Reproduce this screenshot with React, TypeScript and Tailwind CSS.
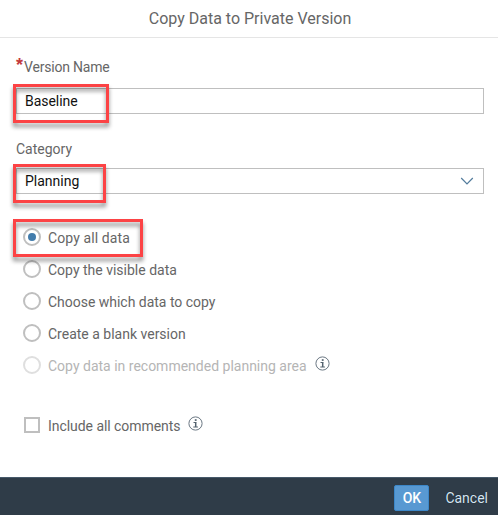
import type { ReactNode } from "react";

function Info() {
  return (
    <svg className="block h-[15px] w-[15px]" viewBox="0 0 15 15" fill="none">
      <circle cx="7.5" cy="7.5" r="6.6" stroke="#6b7883" strokeWidth="1" />
      <path d="M5.5 6.5h2.7M5.3 11h4.6" stroke="#53626e" strokeWidth="1" />
      <path d="M7.7 6v5" stroke="#53626e" strokeWidth="1.5" />
      <rect x="6.8" y="3.2" width="1.8" height="1.7" fill="#53626e" />
    </svg>
  );
}

function Highlight({ className }: { className: string }) {
  return (
    <div
      className={`pointer-events-none absolute border-[3px] border-[#fc4345] drop-shadow-[0_4px_2px_rgba(0,0,0,0.45)] ${className}`}
    />
  );
}

function Option({
  children,
  tracking = "tracking-normal",
  checked = false,
  disabled = false,
}: {
  children: ReactNode;
  tracking?: string;
  checked?: boolean;
  disabled?: boolean;
}) {
  return (
    <div className="flex h-8 items-center">
      <span
        className={`flex h-[18px] w-[18px] shrink-0 items-center justify-center rounded-full border-2 ${
          disabled ? "border-[#dfdfdf]" : "border-[#bfbfbf]"
        }`}
      >
        {checked && <span className="h-2 w-2 rounded-full bg-[#427cac]" />}
      </span>
      <span
        className={`ml-[7px] pt-px whitespace-nowrap ${tracking} ${
          disabled ? "text-[#b5b5b5]" : "text-[#666]"
        }`}
      >
        {children}
      </span>
      {disabled && (
        <span className="mb-[3px] ml-[8px]">
          <Info />
        </span>
      )}
    </div>
  );
}

export default function App() {
  return (
    <div className="relative flex h-[515px] w-[498px] flex-col overflow-hidden bg-white font-[Roboto,'Liberation_Sans',sans-serif] text-[14px] leading-5 text-[#666]">
      <header className="flex h-[38px] shrink-0 items-center justify-center border-b border-[#e5e5e5] pt-px pl-0.5 text-[16px]">
        <span>Copy Data to Private Version</span>
      </header>

      <main className="flex flex-1 flex-col pr-[14px] pl-4">
        <label className="mt-[19px] flex h-5 items-center">
          <span className="h-[24px] w-2 font-['Liberation_Sans',sans-serif] text-[18px] leading-5 font-bold text-[#c33a3d]">*</span>
          <span className="tracking-[-0.2px]">Version Name</span>
        </label>
        <div className="mt-[11px] flex h-[26px] items-center border border-[#bfbfbf] pl-2 text-[#111]">
          <span className="tracking-[-0.05px]">Baseline</span>
        </div>
        <label className="mt-[25px] h-5">
          <span>Category</span>
        </label>
        <div className="mt-[9px] flex h-[26px] items-center justify-between border border-[#bfbfbf] pr-[9px] pl-2 text-[#111]">
          <span>Planning</span>
          <svg className="h-[8px] w-[14px]" viewBox="0 0 14 8" fill="none">
            <path d="M1.2 1 7 6.9 12.8 1" stroke="#527b9c" strokeWidth="1.2" />
          </svg>
        </div>

        <div className="mt-[27px] flex flex-col pl-[7px]">
          <Option checked tracking="tracking-[0.1px]">Copy all data</Option>
          <Option>Copy the visible data</Option>
          <Option tracking="tracking-[-0.02px]">Choose which data to copy</Option>
          <Option>Create a blank version</Option>
          <Option disabled>Copy data in recommended planning area</Option>
        </div>

        <div className="mt-[28px] flex h-8 items-center pl-2">
          <span className="h-4 w-4 border-2 border-[#bfbfbf]" />
          <span className="ml-2 pt-px tracking-[-0.05px]">Include all comments</span>
          <span className="mb-[3px] ml-[7px]">
            <Info />
          </span>
        </div>
      </main>

      <footer className="flex h-[38px] shrink-0 items-start justify-end border-t border-[#46596a] bg-[#2f3c48] pt-[7px] pr-[10px]">
        <button className="flex h-[26px] w-[35px] items-center justify-center rounded-[2px] border border-[#3c87c8] bg-[#5899d2] font-medium text-white">
          <span>OK</span>
        </button>
        <button className="ml-4 flex h-[26px] items-center text-[#d5e5f2] [text-shadow:0_0_1px_#101820]">
          <span>Cancel</span>
        </button>
      </footer>

      <Highlight className="top-[84px] left-[13px] h-[39px] w-[96px]" />
      <Highlight className="top-[164px] left-[13px] h-[39px] w-[93px]" />
      <Highlight className="top-[219px] left-[13px] h-[38px] w-[130px]" />
    </div>
  );
}
